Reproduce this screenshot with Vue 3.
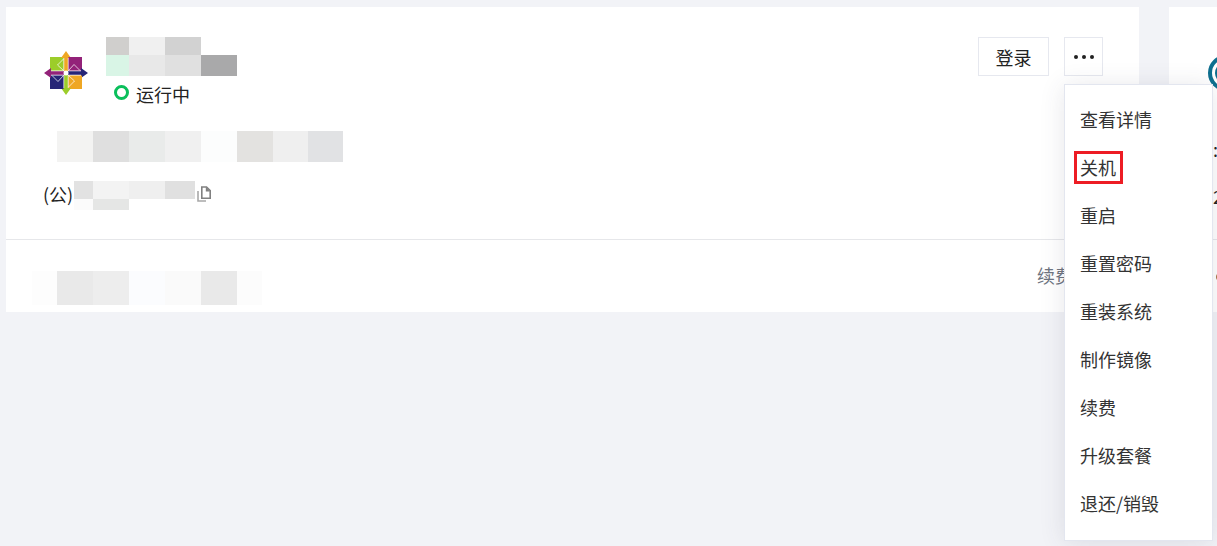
<script setup>
const menuItems = ['查看详情', '关机', '重启', '重置密码', '重装系统', '制作镜像', '续费', '升级套餐', '退还/销毁']

const nameRows = [
  [[23, '#d0cfcd'], [36, '#f0f0f0'], [36, '#d2d2d2']],
  [[23, '#d9f5e6'], [36, '#e8e8e8'], [36, '#e0e0e0'], [36, '#a9a9aa']],
]
const descCells = [
  [36, '#f3f3f2'], [36, '#dfdfdf'], [36, '#e9ebea'], [36, '#f0f0f0'],
  [36, '#fcfdfd'], [36, '#e3e2e0'], [35, '#efefef'], [35, '#e1e2e4'],
]
const ipRows = [
  [[19, '#e2e2e2'], [36, '#f3f3f3'], [36, '#efefef'], [30, '#e0e0e0']],
  [[19, '#fbfbfb'], [36, '#e5e6e5']],
]
const footCells = [
  [25, '#fdfdfd'], [36, '#e9e9e9'], [36, '#ededed'], [36, '#fbfcfe'],
  [36, '#fafafa'], [36, '#e9e9e9'], [25, '#fcfcfc'],
]
// logo quadrants, clockwise from top left: square colour, then the arrow after it
const logoParts = [
  { angle: 0, square: '#9ccd2a', arrow: '#efa724' },
  { angle: 90, square: '#932279', arrow: '#262577' },
  { angle: 180, square: '#efa724', arrow: '#9ccd2a' },
  { angle: 270, square: '#262577', arrow: '#932279' },
]
</script>

<template>
  <div class="page">
    <div class="card">
      <div class="card-body">
        <div class="head">
          <svg class="logo" viewBox="0 0 44 44" width="44" height="44">
            <g v-for="p in logoParts" :key="p.angle" :transform="`rotate(${p.angle} 22 22)`">
              <path d="M6 6h13.500v13.500H6z" :fill="p.square" />
              <path d="M19.500 8l-6 6 6 5.500" fill="none" stroke="#fff" stroke-width=".9" opacity=".8" />
              <path d="M22 0l5 7h-3.200v13h-3.600V7H17z" :fill="p.arrow" />
            </g>
            <circle cx="22" cy="22" r="2.500" fill="#fff" />
          </svg>
          <div class="title">
            <div class="mosaic-row" v-for="(row, i) in nameRows" :key="i" :class="'name-row-' + i">
              <i v-for="(c, j) in row" :key="j" :style="{ width: c[0] + 'px', background: c[1] }"></i>
            </div>
            <div class="status">
              <span class="ring"></span>
              <span>运行中</span>
            </div>
          </div>
        </div>

        <div class="mosaic-row desc">
          <i v-for="(c, j) in descCells" :key="j" :style="{ width: c[0] + 'px', background: c[1] }"></i>
        </div>

        <div class="ip">
          <span class="ip-label">(公)</span>
          <div class="ip-value">
            <div class="mosaic-row" v-for="(row, i) in ipRows" :key="i" :class="'ip-row-' + i">
              <i v-for="(c, j) in row" :key="j" :style="{ width: c[0] + 'px', background: c[1] }"></i>
            </div>
          </div>
          <svg class="copy" viewBox="0 0 14 16" width="14" height="16">
            <path d="M1 5v10h8" fill="none" stroke="#a8a8a8" stroke-width="1.600" />
            <path d="M4.800 1h4.700l3.700 3.700v7.500H4.800z" fill="#fff" stroke="#808080" stroke-width="1.600" />
            <path d="M8.800 1v4.500h4.200" fill="#808080" />
          </svg>
        </div>

        <div class="actions">
          <button class="btn login">登录</button>
          <button class="btn more"><b></b><b></b><b></b></button>
        </div>
      </div>

      <div class="card-foot">
        <div class="mosaic-row foot-mosaic">
          <i v-for="(c, j) in footCells" :key="j" :style="{ width: c[0] + 'px', background: c[1] }"></i>
        </div>
        <span class="renew">续费</span>
      </div>
    </div>

    <div class="card next">
      <div class="next-body">
        <div class="next-logo"><div class="next-logo-inner"></div></div>
        <div class="next-line colon">:</div>
        <div class="next-line digit">2</div>
      </div>
      <div class="next-foot"></div>
    </div>

    <ul class="menu">
      <li v-for="(item, i) in menuItems" :key="item">
        <span class="item-text">{{ item }}</span>
        <em v-if="i === 1" class="mark"></em>
      </li>
    </ul>
  </div>
</template>

<style>
html, body { margin: 0; background: #f2f3f7; }
</style>

<style scoped>
.page {
  position: relative;
  display: flex;
  gap: 30px;
  width: 1217px;
  height: 546px;
  padding: 7px 0 0 6px;
  box-sizing: border-box;
  overflow: hidden;
  background: #f2f3f7;
  font-family: "Noto Sans CJK SC", "Liberation Sans", sans-serif;
  font-size: 18px;
  color: #222;
}

.card { flex: none; width: 1133px; height: 305px; background: #fff; }
.card.next { width: 300px; }

.card-body { position: relative; height: 233px; padding: 30px 0 0 38px; box-sizing: border-box; border-bottom: 1px solid #e6e7ea; }

.head { display: flex; }
.logo { margin-top: 14px; }
.title { margin-left: 18px; }

.mosaic-row { display: flex; }
.mosaic-row i { display: block; height: 100%; }
.name-row-0 { height: 18px; }
.name-row-1 { height: 21px; }

.status { display: flex; align-items: flex-start; height: 38px; margin-left: 8px; line-height: 36px; }
.ring { width: 15px; height: 15px; margin: 9px 7px 0 0; border: 3px solid #0abf5b; border-radius: 50%; box-sizing: border-box; }

.desc { height: 31px; margin: 17px 0 0 13px; }

.ip { display: flex; align-items: flex-start; margin: 19px 0 0 -1px; }
.ip-label { width: 30px; margin-right: 1px; line-height: 27px; }
.ip-row-0 { height: 18px; }
.ip-row-1 { height: 11px; }
.ip-value { width: 123px; }
.copy { margin-top: 5px; }

.actions { position: absolute; top: 30px; right: 36px; display: flex; gap: 15px; }
.btn {
  height: 39px;
  padding: 0;
  border: 1px solid #e6e8ef;
  background: #fff;
  font: inherit;
  color: #222;
}
.login { width: 71px; }
.more { display: flex; align-items: center; justify-content: center; gap: 4px; width: 39px; }
.more b { width: 4px; height: 4px; border-radius: 50%; background: #222; }

.card-foot { display: flex; justify-content: space-between; height: 71px; padding: 31px 66px 0 26px; box-sizing: border-box; }
.foot-mosaic { height: 34px; }
.renew { margin-top: -2px; color: #6e7480; line-height: 12px; }

.next-body { height: 233px; padding: 1px 0 0 39px; box-sizing: border-box; border-bottom: 1px solid #e6e7ea; }
.next-logo { width: 36px; height: 36px; margin-top: 47px; padding: 3px; border: 4px solid #0e6f8f; border-radius: 50%; box-sizing: border-box; }
.next-logo-inner { width: 22px; height: 22px; border-radius: 50%; background: #0e6f8f; }
.next-line { margin-left: 5px; line-height: 24px; }
.colon { margin-top: 46px; }
.digit { margin-top: 23px; }
.next-foot { width: 10px; height: 10px; margin: 32px 0 0 47px; border-radius: 50%; background: #a8703f; }

.menu {
  position: absolute;
  top: 84px;
  left: 1064px;
  width: 149px;
  margin: 0;
  padding: 11px 0 12px;
  box-sizing: border-box;
  list-style: none;
  background: #fff;
  border: 1px solid #e3e6ef;
  box-shadow: 0 2px 24px rgba(54, 58, 80, 0.12);
}
.menu li { position: relative; height: 48px; padding-left: 15px; line-height: 46px; white-space: nowrap; color: #333; }
.mark { position: absolute; top: 7px; left: 9px; width: 49px; height: 33px; border: 3px solid #ed1c24; box-sizing: border-box; }
</style>
